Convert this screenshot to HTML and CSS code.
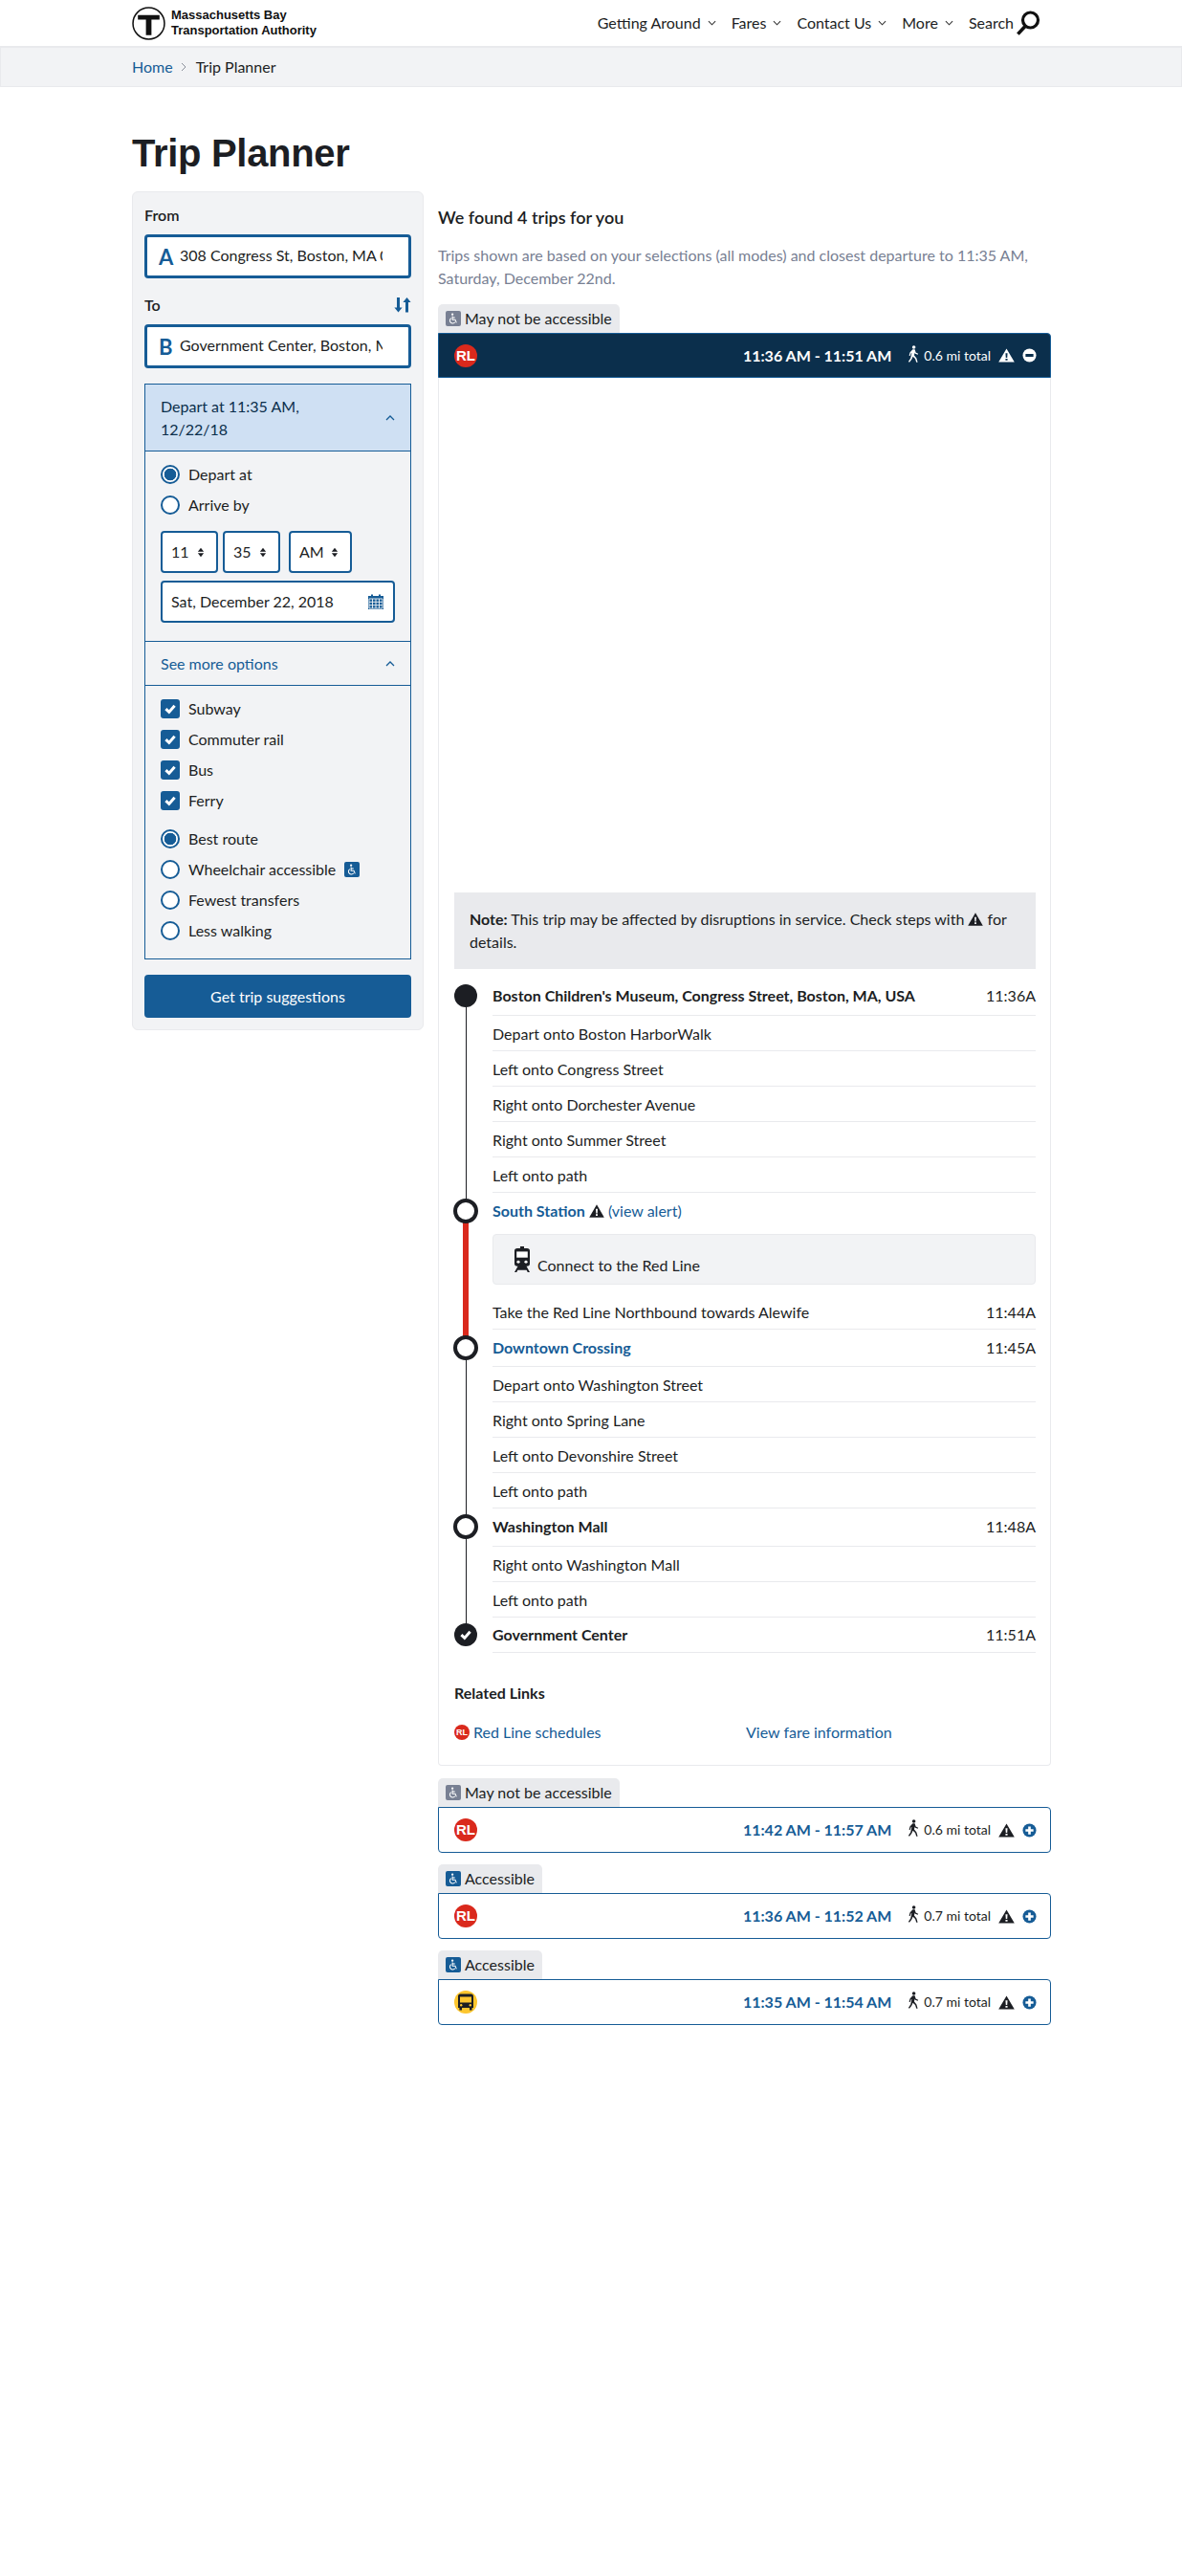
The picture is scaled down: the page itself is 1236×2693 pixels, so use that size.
FILE: index.html
```html
<!DOCTYPE html>
<html lang="en">
<head>
<meta charset="utf-8">
<title>Trip Planner</title>
<link rel="stylesheet" href="styles.css">
</head>
<body>
<svg class="defs" width="0" height="0" aria-hidden="true">
  <symbol id="warn" viewBox="0 0 16 14"><path fill-rule="evenodd" d="M8 0.3 L15.8 13.7 H0.2 Z M7 4.8 L7.3 9.4 H8.7 L9 4.8 Z M7 10.2 V12 H9 V10.2 Z"/></symbol>
  <symbol id="walk" viewBox="0 0 12 18"><circle cx="6.6" cy="2" r="1.8"/><path d="M5.4 4.3 H7.6 L8.6 7.4 L11.2 8.8 L10.6 9.8 L7.6 8.4 L7.4 7.4 L7 10.6 L9.4 13.4 L10.6 17.8 H9.2 L8 14 L5.6 11.8 L4.4 14.6 L2 17.8 L0.9 17 L3.2 13.6 L4.4 8 L3.5 8.6 L2.8 11 L1.6 10.7 L2.5 7.4 Z"/></symbol>
  <symbol id="chair" viewBox="0 0 16 16"><circle cx="7" cy="3" r="1.3" fill="currentColor"/><path fill="none" stroke="currentColor" stroke-width="1.2" d="M7 5 V9.5 H10.3 L11.8 13 M7 6.8 H10 M5.5 7.6 A3.3 3.3 0 1 0 10 12.2"/></symbol>
  <symbol id="check" viewBox="0 0 16 16"><path fill="none" stroke="currentColor" stroke-width="3" d="M3.4 8.2 L6.8 11.4 L12.6 4.8"/></symbol>
  <symbol id="updown" viewBox="0 0 10 14"><path d="M5 1 L9 6 H1 Z M1 8 H9 L5 13 Z"/></symbol>
  <symbol id="chev-d" viewBox="0 0 10 6"><path fill="none" stroke="currentColor" stroke-width="1.2" d="M1 1 L5 5 L9 1"/></symbol>
  <symbol id="chev-u" viewBox="0 0 10 6"><path fill="none" stroke="currentColor" stroke-width="1.3" d="M1 5 L5 1 L9 5"/></symbol>
</svg>

<header class="site-header">
  <div class="wrap header-inner">
    <a class="logo">
      <svg class="logo-mark" viewBox="0 0 34 34"><circle cx="17" cy="17" r="16" fill="#fff" stroke="#111" stroke-width="1.5"/><path fill="#111" d="M6 8.5 H28 V13 H19.8 V29 H14.2 V13 H6 Z"/></svg>
      <span class="logo-text">Massachusetts Bay<br>Transportation Authority</span>
    </a>
    <nav class="main-nav">
      <span class="nav-item">Getting Around <svg class="chev"><use href="#chev-d"/></svg></span>
      <span class="nav-item">Fares <svg class="chev"><use href="#chev-d"/></svg></span>
      <span class="nav-item">Contact Us <svg class="chev"><use href="#chev-d"/></svg></span>
      <span class="nav-item">More <svg class="chev"><use href="#chev-d"/></svg></span>
      <span class="nav-item nav-search">Search
        <svg class="search-icon" viewBox="0 0 26 26"><circle cx="15.5" cy="10" r="8" fill="none" stroke="#111" stroke-width="3.2"/><path d="M10.2 16.2 L2.4 24.6" stroke="#111" stroke-width="3.6" fill="none"/></svg>
      </span>
    </nav>
  </div>
</header>

<div class="crumbs">
  <div class="wrap crumbs-inner"><a class="link">Home</a><svg class="crumb-sep" viewBox="0 0 6 10"><path fill="none" stroke="#8a8f9a" d="M1 1 L5 5 L1 9"/></svg><span>Trip Planner</span></div>
</div>

<main class="wrap page">
  <h1 class="title">Trip Planner</h1>
  <div class="columns">
    <aside class="planner">
      <div class="field-label">From</div>
      <div class="addr"><span class="addr-letter">A</span><input class="addr-input" value="308 Congress St, Boston, MA 02210, USA" readonly></div>
      <div class="field-label to-label"><span>To</span>
        <svg class="swap" viewBox="0 0 18 16"><path fill="#165c96" d="M3 0 H6 V10.5 H8.6 L4.5 15.5 L0.4 10.5 H3 Z M12 15.5 H15 V5 H17.6 L13.5 0 L9.4 5 H12 Z"/></svg>
      </div>
      <div class="addr"><span class="addr-letter">B</span><input class="addr-input" value="Government Center, Boston, MA, USA" readonly></div>

      <section class="accordion">
        <div class="acc-head acc-open"><span>Depart at 11:35 AM,<br>12/22/18</span><svg class="chev-up"><use href="#chev-u"/></svg></div>
        <div class="acc-body time-body">
          <div class="opt"><span class="radio on"></span>Depart at</div>
          <div class="opt"><span class="radio"></span>Arrive by</div>
          <div class="time-row">
            <span class="sel sel-num">11<svg class="updown"><use href="#updown"/></svg></span>
            <span class="sel sel-num">35<svg class="updown"><use href="#updown"/></svg></span>
            <span class="sel sel-ampm">AM<svg class="updown"><use href="#updown"/></svg></span>
          </div>
          <div class="sel date">Sat, December 22, 2018
            <svg class="cal" viewBox="0 0 16 16"><path fill="#165c96" d="M0 2 H3 V0.5 H5 V2 H11 V0.5 H13 V2 H16 V16 H0 Z"/><path stroke="#f2f3f5" stroke-width="0.9" fill="none" d="M1 5 H15 V15 H1 Z M1 8.3 H15 M1 11.7 H15 M4.5 5 V15 M8 5 V15 M11.5 5 V15"/></svg>
          </div>
        </div>
        <div class="acc-head acc-more"><span>See more options</span><svg class="chev-up"><use href="#chev-u"/></svg></div>
        <div class="acc-body more-body">
          <div class="opt"><span class="box"><svg class="box-check"><use href="#check"/></svg></span>Subway</div>
          <div class="opt"><span class="box"><svg class="box-check"><use href="#check"/></svg></span>Commuter rail</div>
          <div class="opt"><span class="box"><svg class="box-check"><use href="#check"/></svg></span>Bus</div>
          <div class="opt"><span class="box"><svg class="box-check"><use href="#check"/></svg></span>Ferry</div>
          <div class="opt opt-gap"><span class="radio on"></span>Best route</div>
          <div class="opt"><span class="radio"></span>Wheelchair accessible<span class="chair-tile blue"><svg class="chair-svg"><use href="#chair"/></svg></span></div>
          <div class="opt"><span class="radio"></span>Fewest transfers</div>
          <div class="opt"><span class="radio"></span>Less walking</div>
        </div>
      </section>
      <div class="submit">Get trip suggestions</div>
    </aside>

    <section class="results">
      <h2 class="found">We found 4 trips for you</h2>
      <p class="desc">Trips shown are based on your selections (all modes) and closest departure to 11:35 AM, Saturday, December 22nd.</p>

      <div class="badge"><span class="chair-tile gray"><svg class="chair-svg"><use href="#chair"/></svg></span>May not be accessible</div>
      <div class="trip-bar open">
        <span class="rl">RL</span>
        <span class="times">11:36 AM - 11:51 AM</span>
        <svg class="walk"><use href="#walk"/></svg><span class="dist">0.6 mi total</span>
        <svg class="warn"><use href="#warn"/></svg>
        <svg class="toggle" viewBox="0 0 16 16"><circle cx="8" cy="8" r="7.5" fill="#fff"/><path fill="#0b2f4c" d="M3.6 6.4 H12.4 V9.6 H3.6 Z"/></svg>
      </div>
      <div class="trip-panel">
        <div class="map"></div>
        <div class="note"><strong>Note:</strong> This trip may be affected by disruptions in service. Check steps with <svg class="warn-inline"><use href="#warn"/></svg> for details.</div>

        <div class="itin">
          <div class="row stop h40"><div class="rail rail-start"><span class="dot-solid"></span></div><div class="row-main"><b>Boston Children's Museum, Congress Street, Boston, MA, USA</b><span>11:36A</span></div></div>
          <div class="row"><div class="rail rail-line"></div><div class="row-main">Depart onto Boston HarborWalk</div></div>
          <div class="row"><div class="rail rail-line"></div><div class="row-main">Left onto Congress Street</div></div>
          <div class="row"><div class="rail rail-line"></div><div class="row-main">Right onto Dorchester Avenue</div></div>
          <div class="row"><div class="rail rail-line"></div><div class="row-main">Right onto Summer Street</div></div>
          <div class="row"><div class="rail rail-line"></div><div class="row-main">Left onto path</div></div>
          <div class="row stop south"><div class="rail rail-to-red"><span class="ring"></span></div><div class="row-main flat"><span><a class="link strong">South Station</a> <svg class="warn-inline"><use href="#warn"/></svg> <a class="link">(view alert)</a></span></div></div>
          <div class="row connect-row"><div class="rail rail-red"></div><div class="connect"><svg class="subway-icon" viewBox="0 0 16 30" preserveAspectRatio="none"><path fill="#1c1e23" d="M6 0 H10 V2.2 H13 Q16 2.2 16 5 V20 Q16 23 13 23 L12.5 23 L16 30 H13.8 L12.6 27.4 H3.4 L2.2 30 H0 L3.5 23 L3 23 Q0 23 0 20 V5 Q0 2.2 3 2.2 H6 Z"/><path fill="#fff" d="M2.2 6 H13.8 V13 H2.2 Z"/><circle cx="4" cy="18" r="1.6" fill="#fff"/><circle cx="12" cy="18" r="1.6" fill="#fff"/></svg><span>Connect to the Red Line</span></div></div>
          <div class="row take-row"><div class="rail rail-red"></div><div class="row-main">Take the Red Line Northbound towards Alewife<span>11:44A</span></div></div>
          <div class="row stop h39"><div class="rail rail-from-red"><span class="ring"></span></div><div class="row-main"><a class="link strong">Downtown Crossing</a><span>11:45A</span></div></div>
          <div class="row"><div class="rail rail-line"></div><div class="row-main">Depart onto Washington Street</div></div>
          <div class="row"><div class="rail rail-line"></div><div class="row-main">Right onto Spring Lane</div></div>
          <div class="row"><div class="rail rail-line"></div><div class="row-main">Left onto Devonshire Street</div></div>
          <div class="row"><div class="rail rail-line"></div><div class="row-main">Left onto path</div></div>
          <div class="row stop h40"><div class="rail rail-line"><span class="ring"></span></div><div class="row-main"><b>Washington Mall</b><span>11:48A</span></div></div>
          <div class="row"><div class="rail rail-line"></div><div class="row-main">Right onto Washington Mall</div></div>
          <div class="row"><div class="rail rail-line"></div><div class="row-main">Left onto path</div></div>
          <div class="row stop last-stop"><div class="rail rail-end"><span class="dot-check"><svg class="end-check"><use href="#check"/></svg></span></div><div class="row-main"><b>Government Center</b><span>11:51A</span></div></div>
        </div>

        <h3 class="related">Related Links</h3>
        <div class="related-links">
          <a class="link rel-link"><span class="rl rl-small">RL</span>Red Line schedules</a>
          <a class="link rel-link">View fare information</a>
        </div>
      </div>

      <div class="badge badge-next"><span class="chair-tile gray"><svg class="chair-svg"><use href="#chair"/></svg></span>May not be accessible</div>
      <div class="trip-bar">
        <span class="rl">RL</span>
        <span class="times">11:42 AM - 11:57 AM</span>
        <svg class="walk"><use href="#walk"/></svg><span class="dist">0.6 mi total</span>
        <svg class="warn"><use href="#warn"/></svg>
        <svg class="toggle" viewBox="0 0 16 16"><circle cx="8" cy="8" r="7.5" fill="#165c96"/><path fill="#fff" d="M6.6 3.6 H9.4 V6.6 H12.4 V9.4 H9.4 V12.4 H6.6 V9.4 H3.6 V6.6 H6.6 Z"/></svg>
      </div>

      <div class="badge badge-next"><span class="chair-tile blue"><svg class="chair-svg"><use href="#chair"/></svg></span>Accessible</div>
      <div class="trip-bar">
        <span class="rl">RL</span>
        <span class="times">11:36 AM - 11:52 AM</span>
        <svg class="walk"><use href="#walk"/></svg><span class="dist">0.7 mi total</span>
        <svg class="warn"><use href="#warn"/></svg>
        <svg class="toggle" viewBox="0 0 16 16"><circle cx="8" cy="8" r="7.5" fill="#165c96"/><path fill="#fff" d="M6.6 3.6 H9.4 V6.6 H12.4 V9.4 H9.4 V12.4 H6.6 V9.4 H3.6 V6.6 H6.6 Z"/></svg>
      </div>

      <div class="badge badge-next"><span class="chair-tile blue"><svg class="chair-svg"><use href="#chair"/></svg></span>Accessible</div>
      <div class="trip-bar">
        <svg class="bus" viewBox="0 0 24 24"><circle cx="12" cy="12" r="12" fill="#fdc62f"/><path fill="#1c1e23" d="M6.5 3.5 H17.5 Q20 3.5 20 6 V18 H18.6 V20.5 H16 V18 H8 V20.5 H5.4 V18 H4 V6 Q4 3.5 6.5 3.5 Z"/><path fill="#fdc62f" d="M6 6.5 H18 V12.5 H6 Z"/><circle cx="7.2" cy="15.3" r="1.2" fill="#fdc62f"/><circle cx="16.8" cy="15.3" r="1.2" fill="#fdc62f"/></svg>
        <span class="times">11:35 AM - 11:54 AM</span>
        <svg class="walk"><use href="#walk"/></svg><span class="dist">0.7 mi total</span>
        <svg class="warn"><use href="#warn"/></svg>
        <svg class="toggle" viewBox="0 0 16 16"><circle cx="8" cy="8" r="7.5" fill="#165c96"/><path fill="#fff" d="M6.6 3.6 H9.4 V6.6 H12.4 V9.4 H9.4 V12.4 H6.6 V9.4 H3.6 V6.6 H6.6 Z"/></svg>
      </div>
    </section>
  </div>
</main>
</body>
</html>
```

FILE: styles.css
```css
* { box-sizing: border-box; }
html, body { margin: 0; padding: 0; }
body {
  min-height: 2693px;
  background: #fff;
  color: #1c1e23;
  font-family: Lato, "Noto Sans", sans-serif;
  font-size: 16px;
  line-height: 24px;
}
.defs { display: block; height: 0; }
.wrap { width: 961px; margin-left: 138px; }
.link { color: #165c96; }
.strong { font-weight: 700; }

.site-header { height: 48px; background: #fff; }
.header-inner { display: flex; align-items: center; justify-content: space-between; height: 48px; }
.logo { display: flex; align-items: center; gap: 6px; }
.logo-mark { width: 35px; height: 35px; flex: none; }
.logo-text { font: 700 13px/16px "Liberation Sans", Arial, sans-serif; color: #111; }
.main-nav { display: flex; align-items: center; gap: 16px; margin-right: 11px; }
.nav-item { display: flex; align-items: center; gap: 7px; white-space: nowrap; }
.chev { width: 9px; height: 6px; color: #333; }
.nav-search { gap: 2px; }
.search-icon { width: 26px; height: 26px; }

.crumbs { height: 43px; background: #f2f3f5; border: 1px solid #e9eaed; border-width: 2px 1px 1px; }
.crumbs-inner { display: flex; align-items: center; gap: 8px; height: 40px; margin-left: 137px; }
.crumb-sep { width: 6px; height: 10px; margin-right: 2px; }

.title { font: 700 40px/48px "Liberation Sans", Arial, sans-serif; letter-spacing: -0.3px; margin: 45px 0 0; height: 48px; }
.columns { display: flex; align-items: flex-start; gap: 15px; margin-top: 16px; }

.planner { width: 305px; flex: none; padding: 12px; background: #f2f3f5; border: 1px solid #e9eaed; border-radius: 6px; }
.field-label { font-weight: 600; font-size: 16px; line-height: 24px; height: 24px; margin: 0 0 8px; color: #1c1e23; }
.to-label { display: flex; justify-content: space-between; align-items: center; margin-top: 16px; }
.swap { width: 18px; height: 16px; }
.addr { display: flex; align-items: center; height: 46px; background: #fff; border: 3px solid #165c96; border-radius: 4px; padding-left: 12px; }
.addr-letter { color: #165c96; font-size: 22px; font-weight: 700; width: 22px; flex: none; padding-top: 1px; }
.addr-input { flex: 1; min-width: 0; width: 10px; border: 0; padding: 0 27px 2px 0; margin: 0; background: transparent; font: 400 16px/24px Lato, sans-serif; color: #1c1e23; outline: none; }

.accordion { margin-top: 16px; border: 1px solid #165c96; }
.acc-head { display: flex; align-items: center; justify-content: space-between; padding: 0 16px; color: #165c96; }
.acc-open { height: 70px; background: #cfe0f3; color: #0b2f4c; border-bottom: 1px solid #165c96; }
.chev-up { width: 10px; height: 6px; color: #165c96; flex: none; }
.acc-more { height: 47px; border-top: 1px solid #165c96; border-bottom: 1px solid #165c96; }
.acc-body { padding: 8px 16px 0; }
.time-body { height: 198px; }
.more-body { height: 285px; padding-top: 8px; }
.opt { display: flex; align-items: center; gap: 9px; height: 32px; white-space: nowrap; }
.opt-gap { margin-top: 8px; }
.radio { width: 20px; height: 20px; flex: none; background: #fff; border: 2px solid #165c96; border-radius: 50%; }
.radio.on { background: radial-gradient(circle, #165c96 0 6px, #fff 6.6px); }
.box { display: flex; align-items: center; justify-content: center; width: 20px; height: 20px; flex: none; background: #165c96; border-radius: 3px; color: #fff; }
.box-check { width: 16px; height: 16px; }
.time-row { display: flex; gap: 5px; margin-top: 11px; }
.sel { display: flex; align-items: center; justify-content: space-between; height: 44px; padding: 0 12px 0 9px; background: #fff; border: 2px solid #165c96; border-radius: 4px; }
.sel-num { width: 60px; }
.sel-ampm { width: 66px; margin-left: 4px; }
.updown { width: 8px; height: 11px; fill: #1c1e23; }
.date { width: 245px; margin-top: 8px; padding-right: 10px; }
.cal { width: 16px; height: 16px; }
.submit { height: 45px; margin-top: 16px; background: #165c96; color: #fff; text-align: center; line-height: 45px; border-radius: 4px; }
.chair-tile { display: inline-flex; align-items: center; justify-content: center; width: 16px; height: 16px; border-radius: 2px; color: #fff; flex: none; }
.chair-svg { width: 14px; height: 14px; }
.blue { background: #165c96; }
.gray { background: #788093; }

.results { width: 641px; flex: none; padding-top: 15px; }
.found { font-size: 18px; line-height: 24px; font-weight: 600; margin: 0; }
.desc { margin: 16px 0 0; color: #788093; }
.badge { display: inline-flex; align-items: center; gap: 4px; height: 30px; padding: 0 8px; margin-top: 15px; background: #e9eaed; border-radius: 5px 5px 0 0; vertical-align: top; }
.badge-next { margin-top: 12px; }
.trip-bar { display: flex; align-items: center; height: 48px; padding: 0 14px 0 16px; border: 1px solid #165c96; border-radius: 0 4px 4px 4px; color: #1c1e23; fill: #1c1e23; }
.trip-bar .times { margin-left: auto; color: #165c96; font-weight: 700; font-size: 16px; }
.trip-bar.open { height: 47px; background: #0b2f4c; color: #fff; fill: #fff; border-radius: 0 4px 0 0; }
.trip-bar.open .times { color: #fff; }
.rl { display: inline-flex; align-items: center; justify-content: center; width: 24px; height: 24px; background: #da291c; color: #fff; border-radius: 50%; font: 700 15px/24px "Liberation Sans", Arial, sans-serif; flex: none; }
.bus { width: 24px; height: 24px; flex: none; }
.walk { width: 12px; height: 18px; margin: -4px 0 0 17px; flex: none; }
.dist { font-size: 14px; margin-left: 5px; }
.warn { width: 17px; height: 15px; margin-left: 8px; flex: none; }
.toggle { width: 15px; height: 15px; margin-left: 8px; flex: none; }
.warn-inline { display: inline-block; width: 16px; height: 14px; fill: #1c1e23; vertical-align: -1px; }

.trip-panel { padding: 0 15px 0 16px; margin-bottom: 1px; border: 1px solid #e9eaed; border-top: 0; border-radius: 0 0 4px 4px; }
.map { height: 538px; }
.note { height: 80px; padding: 16px; background: #e9eaed; }

.itin { margin-top: 9px; }
.row { display: flex; gap: 16px; align-items: stretch; }
.rail { display: flex; justify-content: center; align-items: flex-start; width: 24px; flex: none; padding-top: 6px; }
.rail-line { background: linear-gradient(#1c1e23, #1c1e23) 12px 0 / 1px 100% no-repeat; }
.rail-start { background: linear-gradient(#1c1e23, #1c1e23) 12px 100% / 1px 50% no-repeat; }
.rail-end { background: linear-gradient(#1c1e23, #1c1e23) 12px 0 / 1px 50% no-repeat; }
.rail-red { background: linear-gradient(#da291c, #da291c) center / 6px 100% no-repeat; }
.rail-to-red { background: linear-gradient(#1c1e23, #1c1e23) 12px 0 / 1px 50% no-repeat, linear-gradient(#da291c, #da291c) center bottom / 6px 50% no-repeat; }
.rail-from-red { background: linear-gradient(#da291c, #da291c) center top / 6px 50% no-repeat, linear-gradient(#1c1e23, #1c1e23) 12px 100% / 1px 50% no-repeat; }
.row-main { flex: 1; display: flex; align-items: center; justify-content: space-between; height: 37px; padding-top: 2px; border-bottom: 1px solid #e9eaed; }
.stop .row-main { align-items: flex-start; padding-top: 7px; }
.stop .row-main b { font-weight: 700; }
.h40 .row-main { height: 40px; }
.h39 .row-main { height: 39px; }
.south .row-main { height: 43px; }
.last-stop .row-main { padding-top: 6px; }
.flat { border-bottom: 0; }
.ring { width: 26px; height: 26px; margin: 0 -1px; background: #fff; border: 4.5px solid #1c1e23; border-radius: 50%; flex: none; }
.dot-solid { width: 24px; height: 24px; margin-top: 1px; background: #1c1e23; border-radius: 50%; }
.dot-check { display: flex; align-items: center; justify-content: center; width: 24px; height: 24px; background: #1c1e23; color: #fff; border-radius: 50%; }
.end-check { width: 16px; height: 16px; }
.connect { flex: 1; display: flex; align-items: flex-end; gap: 8px; height: 53px; padding: 0 22px 9px; background: #f2f3f5; border: 1px solid #e9eaed; border-radius: 4px; margin-bottom: 10px; }
.subway-icon { width: 16px; height: 27px; margin-bottom: 3px; }
.connect span { line-height: 20px; }
.related { font-size: 16px; font-weight: 700; line-height: 24px; margin: 30px 0 0; }
.related-links { display: grid; grid-template-columns: 305px 1fr; margin: 17px 0 0; padding-bottom: 22px; }
.rel-link { display: flex; align-items: center; gap: 4px; }
.rl-small { width: 16px; height: 16px; font-size: 9px; }
```
